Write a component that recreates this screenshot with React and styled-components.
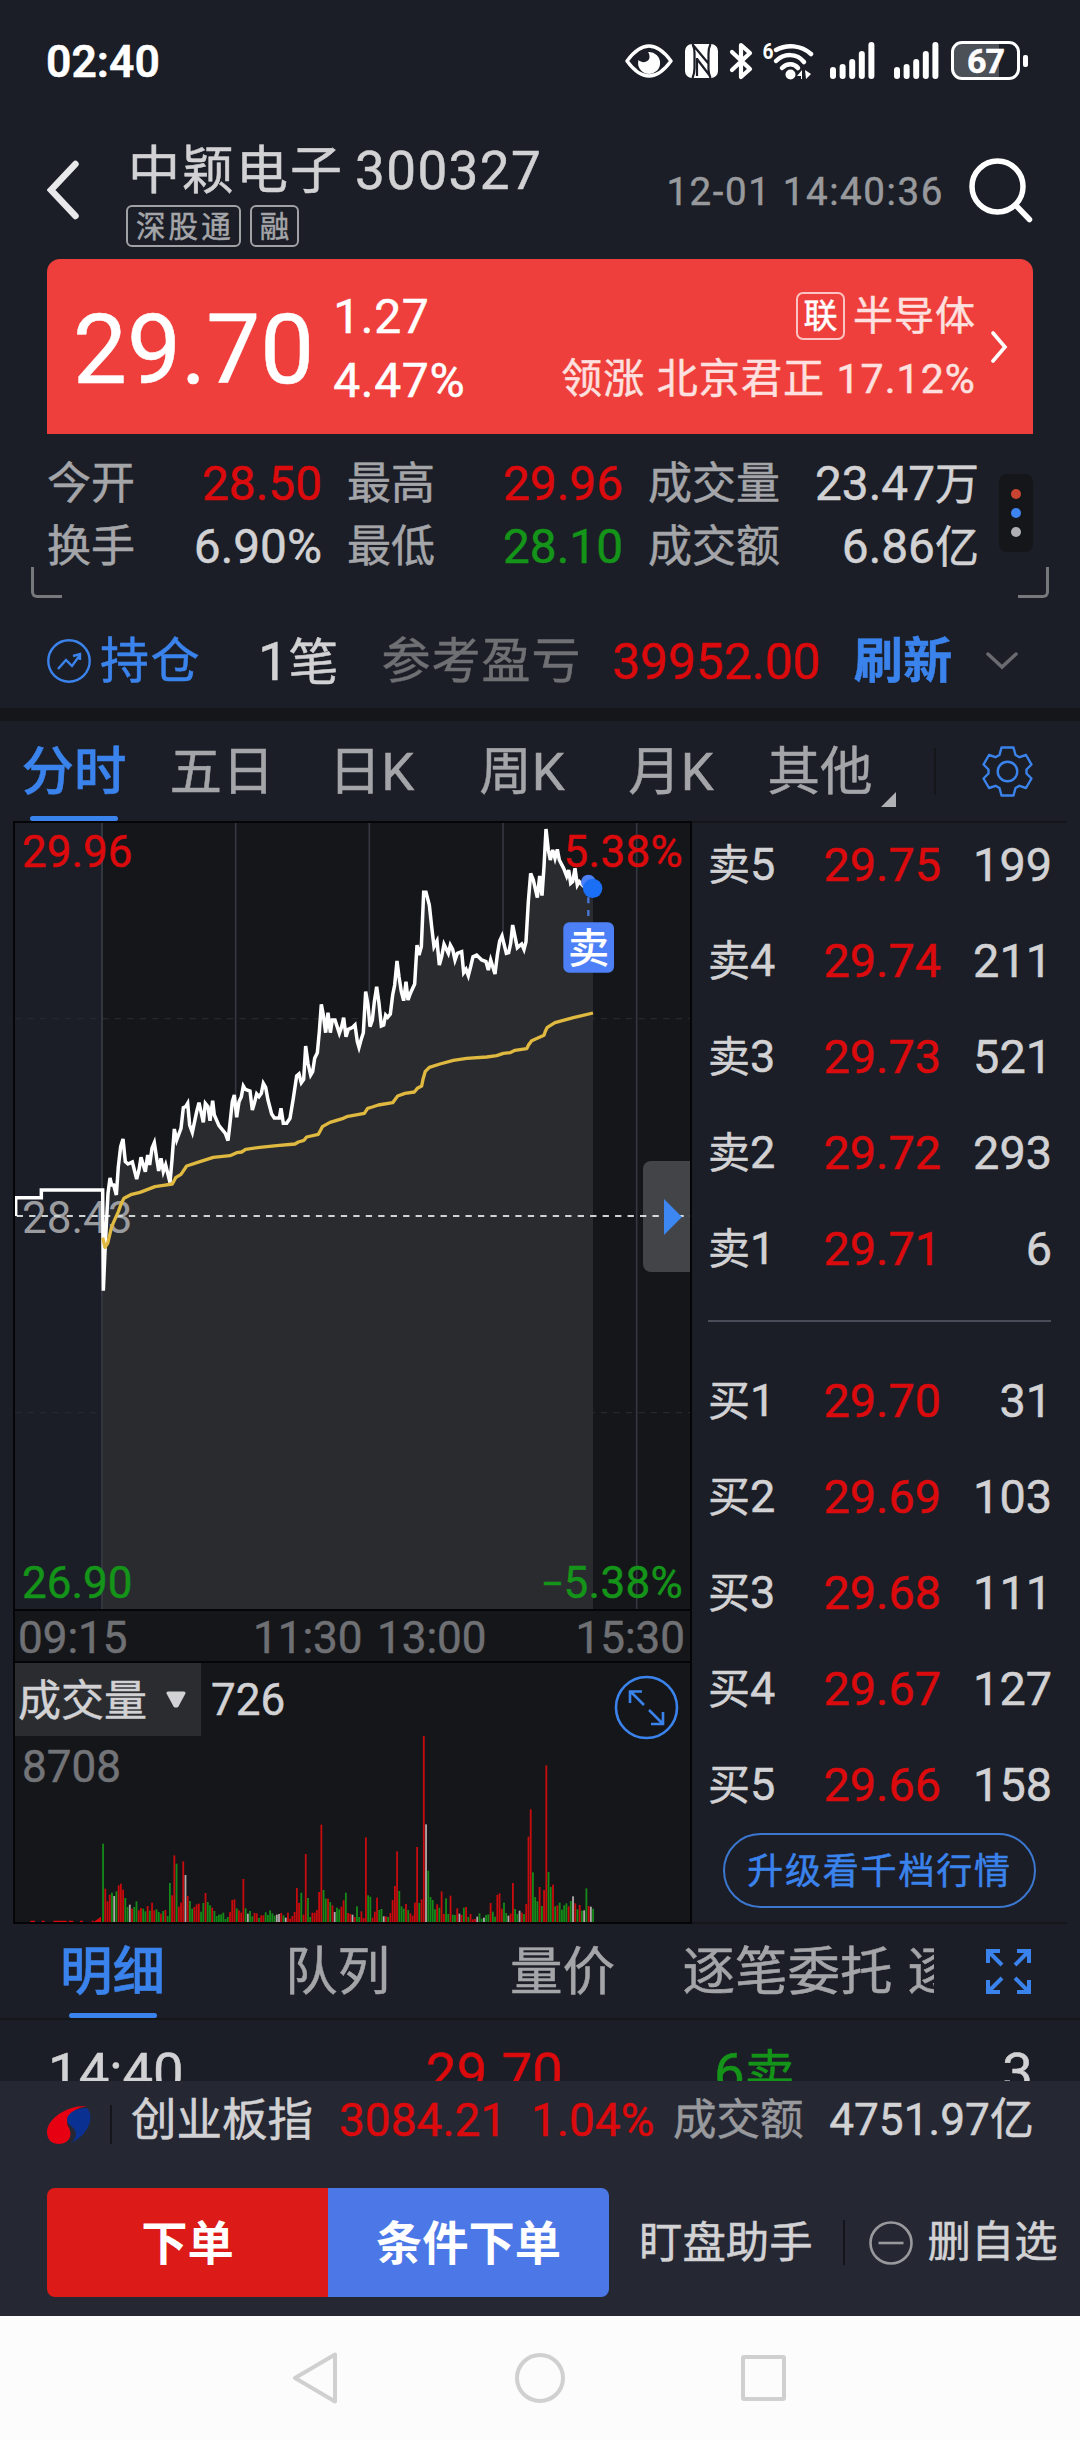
import React from "react";
import styled, { createGlobalStyle } from "styled-components";

const colors = {
  page: "#1b1e26",
  panel: "#15161a",
  footer: "#252733",
  border: "#050508",
  text: "#d2d2d4",
  label: "#a4a5a9",
  muted: "#6f7074",
  red: "#da0a0d",
  green: "#149418",
  blue: "#3b83ec"
};

const GlobalStyle = createGlobalStyle`
  * {
    box-sizing: border-box;
  }
  body {
    margin: 0;
    background: ${colors.page};
    font-family: Roboto, "Noto Sans CJK SC", sans-serif;
    color: ${colors.text};
    -webkit-text-stroke: 0.5px;
  }
  svg {
    display: block;
    flex: none;
  }
`;

const Screen = styled.div`
  width: 1080px;
  height: 2440px;
  display: flex;
  flex-direction: column;
  overflow: hidden;
  background: ${colors.page};
  white-space: nowrap;
`;

/* status bar */

const StatusBar = styled.div`
  display: flex;
  align-items: center;
  height: 121px;
  padding: 0 52px 0 46px;
`;

const Clock = styled.div`
  margin-right: auto;
  padding-top: 3px;
  font-size: 44.5px;
  font-weight: 600;
  line-height: 60px;
  color: #fff;
`;

const StatusIcons = styled.div`
  display: flex;
  align-items: center;
  .nfc {
    margin-left: 12px;
  }
  .bluetooth {
    margin-left: 11px;
  }
  .wifi {
    margin-left: 9px;
  }
  .signal {
    margin-left: 16px;
  }
  .signal + .signal {
    margin-left: 19px;
  }
`;

const Battery = styled.div`
  display: flex;
  align-items: center;
  margin-left: 12px;
  &::after {
    content: "";
    width: 5px;
    height: 12px;
    margin-left: 3px;
    border-radius: 2px;
    background: #fff;
  }
`;

const BatteryBody = styled.div`
  width: 69px;
  height: 39px;
  border: 3px solid #fff;
  border-radius: 11px;
  background: linear-gradient(90deg, #4c5057 71%, transparent 71%);
  font-size: 34px;
  font-weight: 700;
  line-height: 35px;
  text-align: center;
  letter-spacing: -1px;
  color: #fff;
`;

/* header */

const Header = styled.div`
  display: flex;
  align-items: center;
  height: 138px;
  padding: 0 47px;
`;

const TitleBlock = styled.div`
  margin-left: 47px;
  margin-right: auto;
  padding-top: 1px;
`;

const Title = styled.div`
  display: flex;
  height: 70px;
  margin-left: 2px;
  font-size: 52px;
  line-height: 73px;
  letter-spacing: 2px;
`;

const Code = styled.span`
  margin-left: 11px;
  font-size: 53px;
  letter-spacing: 1.4px;
`;

const Tags = styled.div`
  display: flex;
  gap: 9px;
`;

const Tag = styled.span`
  height: 42px;
  padding: 0 5px 0 8px;
  border: 2px solid #a0a1a5;
  border-radius: 6px;
  font-size: 29.5px;
  line-height: 40px;
  letter-spacing: 3.1px;
  color: ${colors.label};
`;

const Timestamp = styled.div`
  margin-right: 25px;
  padding-top: 3px;
  font-size: 38.5px;
  line-height: 50px;
  letter-spacing: 1.6px;
  color: #98999d;
`;

/* price card */

const PriceCard = styled.div`
  display: flex;
  align-items: center;
  height: 175px;
  margin: 0 47px;
  padding: 3px 25px 0;
  border-radius: 13px 13px 0 0;
  background: #ef3f3c;
  color: #fff;
`;

const LastPrice = styled.div`
  padding: 3px 0 0 1px;
  font-size: 96px;
  line-height: 120px;
`;

const Change = styled.div`
  margin: 0 auto 0 19px;
  padding-top: 1px;
  font-size: 48px;
  line-height: 63.5px;
  letter-spacing: 0.7px;
`;

const Sector = styled.div`
  display: flex;
  flex-direction: column;
  align-items: flex-end;
  margin-right: 15px;
  font-size: 40px;
  line-height: 63.5px;
  letter-spacing: 1px;
  color: #fde0df;
`;

const SectorName = styled.div`
  display: flex;
  align-items: center;
`;

const SectorLeader = styled.div`
  font-size: 41px;
  letter-spacing: 1.1px;
`;

const SectorBadge = styled.span`
  width: 49px;
  height: 48px;
  margin-right: 8px;
  border: 2px solid #fbc3c1;
  border-radius: 7px;
  font-size: 34px;
  line-height: 45px;
  letter-spacing: 0;
  text-align: center;
  color: #fff;
`;

/* quote stats */

const Stats = styled.div`
  position: relative;
  display: flex;
  height: 164px;
  padding: 19px 47px 0;
  &::before,
  &::after {
    content: "";
    position: absolute;
    bottom: 0;
    width: 28px;
    height: 28px;
    border-bottom: 3px solid #77787c;
  }
  &::before {
    left: 31px;
    border-left: 3px solid #77787c;
    border-bottom-left-radius: 6px;
  }
  &::after {
    right: 31px;
    border-right: 3px solid #77787c;
    border-bottom-right-radius: 6px;
  }
`;

const StatGrid = styled.div`
  display: grid;
  grid-template-columns: 275px 276px 331px;
  grid-auto-rows: 63px;
  column-gap: 25px;
`;

const Stat = styled.div`
  display: flex;
  justify-content: space-between;
  font-size: 44px;
  line-height: 63px;
  color: ${colors.label};
`;

const StatValue = styled.span`
  font-size: 47.8px;
  color: ${props => props.$color || colors.text};
  small {
    font-size: 44px;
  }
`;

const MorePill = styled.div`
  display: flex;
  flex-direction: column;
  align-items: center;
  justify-content: center;
  gap: 9px;
  width: 34px;
  height: 78px;
  margin: 21px 0 0 auto;
  border-radius: 8px;
  background: ${colors.panel};
`;

const Dot = styled.span`
  width: 10px;
  height: 10px;
  border-radius: 50%;
  background: ${props => props.$color};
`;

/* position row */

const Position = styled.div`
  display: flex;
  align-items: center;
  height: 110px;
  padding: 16px 62px 0 47px;
  font-size: 49px;
  line-height: 70px;
  > span {
    padding-top: 2px;
  }
`;

const PositionLink = styled.span`
  margin-left: 9px;
  color: ${colors.blue};
  letter-spacing: 1.5px;
`;

const PositionCount = styled.span`
  margin-left: 57px;
  font-size: 54px;
  small {
    font-size: 50px;
  }
`;

const PositionLabel = styled.span`
  margin-left: 43px;
  letter-spacing: 1px;
  color: ${colors.muted};
`;

const PositionValue = styled.span`
  margin-left: 31px;
  font-size: 50px;
  letter-spacing: -0.2px;
  color: ${colors.red};
`;

const Refresh = styled.span`
  margin: 0 auto 0 33px;
  font-weight: 700;
  letter-spacing: 0.5px;
  color: ${colors.blue};
`;

const Band = styled.div`
  height: 13px;
  background: ${colors.panel};
`;

/* period tabs */

const PeriodTabs = styled.div`
  display: grid;
  grid-template-columns: 148px 148px 151px 150px 148px 150px 1fr;
  grid-template-rows: 100px;
  height: 100px;
`;

const Tab = styled.div`
  position: relative;
  font-size: 52.5px;
  font-weight: ${props => (props.$active ? 500 : 400)};
  line-height: ${props => props.$line || 102}px;
  text-align: center;
  color: ${props => (props.$active ? colors.blue : colors.label)};
  &::after {
    content: "";
    display: ${props => (props.$active ? "block" : "none")};
    position: absolute;
    bottom: 0;
    left: calc(50% - 44px);
    width: 88px;
    height: 5px;
    border-radius: 3px;
    background: ${colors.blue};
  }
`;

const OtherTab = styled(Tab)`
  svg {
    position: absolute;
    left: 136px;
    bottom: 14px;
  }
`;

const SettingsSlot = styled.div`
  display: flex;
  align-items: center;
  justify-content: flex-end;
  padding-right: 47px;
  &::before {
    content: "";
    width: 2px;
    height: 47px;
    margin-right: 46px;
    background: ${colors.panel};
  }
`;

/* charts */

const Body = styled.div`
  display: flex;
  height: 1103px;
  padding-left: 13px;
`;

const Charts = styled.div`
  display: flex;
  flex-direction: column;
  width: 679px;
`;

const PricePanel = styled.div`
  position: relative;
  display: grid;
  height: 790px;
  border: 2px solid ${colors.border};
  background: ${colors.panel};
  > * {
    grid-area: 1 / 1;
  }
`;

const ChartLabels = styled.div`
  display: grid;
  grid-template-columns: 1fr 1fr;
  align-content: space-between;
  margin-bottom: -3px;
  padding: 2px 7px 0;
  font-size: 44px;
  line-height: 55px;
  z-index: 1;
`;

const ChartLabel = styled.span`
  color: ${props => props.$color};
  &:nth-child(even) {
    text-align: right;
    letter-spacing: 0.3px;
  }
  small {
    margin-right: -1px;
    font-size: 41px;
  }
`;

const Handle = styled.div`
  position: absolute;
  right: 0;
  top: 338px;
  display: flex;
  align-items: center;
  justify-content: flex-end;
  width: 47px;
  height: 111px;
  padding-right: 8px;
  border-radius: 8px 0 0 8px;
  background: rgba(255, 255, 255, 0.2);
`;

const TimeAxis = styled.div`
  display: grid;
  grid-template-columns: 235px 124px 1fr auto;
  height: 50px;
  padding: 0 5px 0 3px;
  border: solid ${colors.border};
  border-width: 0 2px;
  background: ${colors.panel};
  font-size: 44px;
  line-height: 54px;
  color: ${colors.muted};
`;

const VolumePanel = styled.div`
  display: grid;
  height: 263px;
  border: 2px solid ${colors.border};
  background: ${colors.panel};
  > * {
    grid-area: 1 / 1;
  }
`;

const VolumeHead = styled.div`
  display: flex;
  align-items: flex-start;
  font-size: 44px;
  line-height: 75px;
  > svg {
    margin: 12px 11px 0 auto;
  }
`;

const IndicatorSelect = styled.div`
  display: flex;
  align-items: center;
  gap: 19px;
  width: 186px;
  height: 73px;
  margin-right: 10px;
  padding-left: 3px;
  background: #2b2c30;
  font-size: 43px;
`;

const IndicatorName = styled.span`
  padding-top: 3px;
`;

const VolumeMax = styled.div`
  align-self: start;
  padding: 74px 0 0 7px;
  font-size: 44px;
  line-height: 60px;
  color: #737478;
`;

/* order book */

const Book = styled.div`
  flex: 1;
  margin-right: 13px;
  padding: 17px 15px 0 16px;
  border-top: 2px solid ${colors.panel};
  border-bottom: 2px solid ${colors.panel};
`;

const BookRow = styled.div`
  display: grid;
  grid-template-columns: 100px 133px 1fr;
  height: 48px;
  margin-bottom: 48px;
  font-size: 46.8px;
  line-height: 50px;
  text-align: right;
`;

const BookSide = styled.span`
  font-size: 42px;
  text-align: left;
  small {
    font-size: 45px;
  }
`;

const BookPrice = styled.span`
  color: ${colors.red};
`;

const BookDivider = styled.div`
  width: 343px;
  height: 2px;
  margin-bottom: 54px;
  background: #4a4c59;
`;

const UpgradeButton = styled.div`
  width: 313px;
  height: 75px;
  margin: -23px 0 0 15px;
  border: 2px solid #3b77cf;
  border-radius: 38px;
  font-size: 36px;
  line-height: 74px;
  text-align: center;
  letter-spacing: 1.8px;
  color: ${colors.blue};
`;

/* detail */

const DetailTabs = styled.div`
  display: flex;
  justify-content: space-between;
  align-items: center;
  height: 96px;
  padding-right: 49px;
  border-bottom: 2px solid ${colors.panel};
`;

const DetailScroll = styled.div`
  display: grid;
  grid-template-columns: repeat(4, 225px) 120px;
  grid-template-rows: 94px;
  width: 934px;
  height: 94px;
  overflow: hidden;
`;

const DetailRow = styled.div`
  display: grid;
  grid-template-columns: 378px 288px 1fr auto;
  height: 61px;
  padding: 0 47px 0 48px;
  overflow: hidden;
  font-size: 54.5px;
  line-height: 104px;
`;

const DetailCell = styled.span`
  color: ${props => props.$color || colors.text};
  small {
    font-size: 50px;
  }
`;

/* footer */

const Footer = styled.div`
  height: 235px;
  background: ${colors.footer};
`;

const IndexBar = styled.div`
  display: flex;
  align-items: center;
  height: 77px;
  padding: 2px 46px 0 47px;
  font-size: 46px;
  line-height: 77px;
  > svg {
    margin-top: 8px;
  }
`;

const IndexDivider = styled.span`
  width: 2px;
  height: 39px;
  margin: 8px 19px 0 19px;
  background: #14151a;
`;

const IndexName = styled.span`
  width: 208px;
  font-size: 45.5px;
`;

const IndexValue = styled.span`
  width: ${props => props.$width}px;
  color: ${colors.red};
`;

const IndexLabel = styled.span`
  font-size: 43.5px;
  color: #98999d;
`;

const Turnover = styled.span`
  margin-left: auto;
  font-size: 44.2px;
`;

const Actions = styled.div`
  display: flex;
  align-items: center;
  height: 109px;
  margin: 30px 0 0 47px;
  font-size: 43.4px;
  line-height: 112px;
`;

const ActionButton = styled.div`
  width: 281px;
  height: 109px;
  border-radius: ${props => (props.$left ? "8px 0 0 8px" : "0 8px 8px 0")};
  background: ${props => (props.$left ? "#dc1b18" : "#4b78e6")};
  font-size: 46.3px;
  font-weight: 700;
  text-align: center;
  color: #fff;
  -webkit-text-stroke: 0;
`;

const Assistant = styled.span`
  margin-left: 30px;
  padding-top: 2px;
`;

const RemoveAction = styled.div`
  display: flex;
  align-items: center;
  gap: 15px;
  height: 45px;
  margin-left: 30px;
  padding-left: 24px;
  border-left: 2px solid #14151a;
`;

const NavBar = styled.div`
  display: flex;
  align-items: center;
  height: 124px;
  padding: 0 0 1px 292px;
  background: #fcfcfc;
`;

const Eye = () => (
  <svg width="48" height="34" viewBox="0 0 48 34" fill="none">
    <path
      d="M2 17C10 6 17 2 24 2s14 4 22 15C38 28 31 32 24 32S10 28 2 17z"
      stroke="#fff"
      strokeWidth="3.4"
      strokeLinejoin="round"
    />
    <path d="M23 8a11 11 0 1 1-9.5 8c4 4 11 2 11-3 0-2-.5-4-1.500-5z" fill="#fff" />
  </svg>
);

const Nfc = () => (
  <svg className="nfc" width="33" height="34" viewBox="0 0 33 34" fill="none">
    <rect width="33" height="34" rx="7" fill="#fff" />
    <path
      d="M7.500 34c1.500-3 2-6 2-10V9c0-3-.5-6-2-9M25.500 0c-1.500 3-2 6-2 10v15c0 3 .5 6 2 9M8 1l15 18M12 14v18M12 15l13 17"
      stroke={colors.page}
      strokeWidth="2.2"
    />
  </svg>
);

const Bluetooth = () => (
  <svg className="bluetooth" width="25" height="38" viewBox="0 0 25 38" fill="none">
    <path
      d="M3 10l18 17-9 8V3l9 8L3 28"
      stroke="#fff"
      strokeWidth="4.2"
      strokeLinejoin="round"
      strokeLinecap="round"
    />
  </svg>
);

const Wifi = () => (
  <svg className="wifi" width="51" height="38" viewBox="0 0 51 38">
    <text x="-0.5" y="17" fontSize="22" fontWeight="700" textLength="11" lengthAdjust="spacingAndGlyphs" fill="#fff">
      6
    </text>
    <g fill="none" stroke="#fff" strokeWidth="4.5" strokeLinecap="round">
      <path d="M13 8c11-6 25-5 35 4" />
      <path d="M13 19c8-8 21-8 28 1" />
      <path d="M19 26c5-5 12-5 16 0" />
    </g>
    <circle cx="27.5" cy="32.5" r="5" fill="#fff" />
    <path d="M34 34l5-6v9h-1v-3zM42 28l6 4-5 5z" fill="#fff" />
  </svg>
);

const Signal = () => (
  <svg className="signal" width="45" height="37" viewBox="0 0 45 37" fill="#fff">
    {[12, 15, 20, 28, 37].map((h, i) => (
      <rect key={h} x={i * 9.6} y={37 - h} width="6" height={h} rx="3" />
    ))}
  </svg>
);

const Gear = () => (
  <svg width="51" height="51" viewBox="0 0 51 51" fill="none" stroke={colors.blue} strokeWidth="2.4">
    <path
      strokeLinejoin="round"
      d="M19.500 1.500h12l2 7.500 4 2.200 6.500-2.200 5.500 9.500-5 5v4l5 5-5.500 9.500-6.500-2.200-4 2.200-2 7.500h-12l-2-7.500-4-2.200-6.500 2.200-5.500-9.500 5-5v-4l-5-5L7 9l6.500 2.200 4-2.200z"
    />
    <circle cx="25.5" cy="25.5" r="9.8" />
  </svg>
);

const Expand = () => (
  <svg width="45" height="45" viewBox="0 0 45 45" fill="none" stroke={colors.blue} strokeWidth="4">
    <path d="M2 14V2h12M2 2l14 14M31 2h12v12M43 2L29 16M2 31v12h12M2 43l14-14M31 43h12V31M43 43L29 29" />
  </svg>
);

const FullScreenCircle = () => (
  <svg width="65" height="65" viewBox="0 0 65 65" fill="none" stroke={colors.blue} strokeWidth="2.6">
    <circle cx="32.5" cy="32.5" r="30.5" />
    <path d="M16 28V16.500h12M17 17l13 13M35 35l13 13M49 37v12H37" />
  </svg>
);

// price curve is kept in third-of-a-pixel units, origin at the page corner of the chart
const PRICE =
  "308,1140 310,1442 316,1300 324,1150 330,1104 335,1125 341,1125 349,1155 355,1070 362,1010 369,987 376,1055 384,1062 397,1056 410,1107 417,1080 423,1042 436,1085 443,1035 449,1065 456,1015 463,998 470,1045 476,1083 483,1045 490,1085 497,1065 510,1118 516,1050 523,957 530,990 543,955 550,893 557,890 563,880 569,945 577,967 590,905 597,878 610,937 616,880 624,890 630,932 638,872 643,915 657,947 676,970 684,992 690,940 697,875 703,855 710,922 717,875 724,860 730,828 736,838 750,843 757,900 763,880 770,852 777,860 784,850 790,820 797,832 804,870 815,912 823,924 838,924 843,895 850,940 860,940 870,925 880,865 890,798 897,792 904,818 911,808 917,708 924,760 932,795 938,785 944,745 952,728 958,665 964,583 970,615 977,668 984,608 991,668 997,630 1005,630 1018,670 1025,650 1031,623 1038,680 1045,658 1058,652 1065,645 1072,695 1077,712 1083,690 1090,668 1097,545 1104,585 1110,650 1117,630 1123,575 1130,530 1137,580 1144,648 1151,645 1157,615 1163,622 1171,612 1178,555 1184,525 1191,453 1197,500 1204,545 1211,572 1218,515 1224,570 1232,548 1244,522 1251,405 1257,435 1264,410 1271,247 1278,247 1288,285 1295,350 1302,410 1311,393 1318,465 1325,440 1332,403 1345,430 1351,405 1358,418 1365,450 1372,430 1385,425 1391,488 1398,478 1405,497 1412,470 1419,440 1430,435 1445,450 1458,455 1465,480 1472,450 1485,492 1492,435 1499,393 1506,378 1514,410 1519,430 1526,428 1532,400 1538,345 1545,380 1552,413 1565,402 1572,418 1578,395 1585,275 1592,190 1600,210 1612,263 1619,198 1626,257 1632,170 1638,57 1645,120 1651,150 1658,120 1665,145 1672,118 1678,150 1691,175 1700,198 1706,180 1712,220 1718,215 1725,175 1732,225 1738,215 1747,225 1758,235 1779,235";

const AVERAGE =
  "308,1283 315,1312 323,1300 335,1250 355,1205 364,1180 372,1165 395,1153 420,1147 465,1130 490,1126 517,1122 527,1103 543,1093 560,1068 600,1055 640,1042 690,1037 710,1028 725,1026 737,1018 780,1012 830,1007 885,1002 895,996 912,991 920,981 955,973 962,960 967,950 990,937 1030,925 1040,920 1093,910 1103,895 1117,891 1135,885 1178,878 1193,858 1215,850 1243,846 1252,835 1265,828 1269,808 1276,784 1288,772 1320,762 1360,751 1400,745 1460,741 1490,737 1510,730 1530,728 1545,721 1580,716 1586,704 1595,692 1632,676 1636,664 1642,652 1665,638 1720,623 1779,609";

const VOLUMES =
  "g235 r100 r62 r82 g88 w78 g92 r110 r115 r97 g72 g45 w52 r40 g45 g62 r35 r42 g40 g32 r48 g34 r58 r35 g38 g30 r25 g33 r36 g18 g117 r80 r200 g175 r46 r58 r182 w141 r78 g63 g40 r45 r53 r55 g31 g57 r87 g60 g50 r43 g33 g18 g22 g23 g28 g9 g15 r30 r66 r68 g41 r35 r28 r129 g41 w25 g33 g17 r27 r26 g12 r20 r20 g29 g21 g35 g26 g19 w22 w24 r27 g20 w13 r28 r10 r18 r30 r102 r57 g88 r22 r204 g72 g15 r28 r28 r36 r90 r292 g96 g70 r70 g60 r50 w30 g43 g38 r46 r65 g88 r27 r24 w22 r15 g47 g15 r32 r12 r254 g80 g76 r13 r31 r73 g36 g39 w17 r17 g15 r27 r66 r108 r212 g93 g47 g40 r54 g36 r26 r19 r58 r225 g57 r68 r558 w293 g154 g75 g66 g38 r53 g43 r92 r24 g71 g24 r79 g22 g21 r41 w25 r21 g43 r45 g15 r24 r8 r9 w16 g26 g10 w13 g21 g23 r57 g31 g16 r81 r86 r40 g58 g27 w19 r25 r117 g39 g24 w34 r28 g24 r54 r256 r338 g149 g75 g62 r105 g48 r96 r470 g150 g105 r112 g47 r50 g58 g37 g50 g56 r47 g63 w77 r56 g38 r51 g34 w35 g101 r48 w46 g40"
    .split(" ")
    .map(v => ({ kind: v[0], value: Number(v.slice(1)) }));

const BAR_COLORS = { r: "#c80b0d", g: "#158a18", w: "#b4a9aa" };

const PriceChart = () => (
  <svg width="675" height="786" viewBox="45 39 2025 2358" fill="none">
    <rect x="45" y="39" width="261" height="2358" fill={colors.page} />
    <path d="M45 626H2070M45 1808H2070" stroke="#26282d" strokeWidth="4" strokeDasharray="19 18.4" />
    <path d="M707 39V2397M1108 39V2397M1509 39V2397M1910 39V2397" stroke="#343640" strokeWidth="5" />
    <polygon points={`308,2397 ${PRICE} 1779,2397`} fill="#2a2b2f" />
    <path d="M306 39V2397" stroke="#33363f" strokeWidth="6" />
    <text x="66" y="1270" fontSize="132" fill="#9b9ca0">
      28.43
    </text>
    <path d="M50 1218H2070" stroke="#ced3d3" strokeWidth="6" strokeDasharray="19 18.4" />
    <polyline points={`47,1218 47,1163 124,1163 124,1140 ${PRICE}`} stroke="#fff" strokeWidth="10.5" />
    <polyline points={AVERAGE} stroke="#e0b940" strokeWidth="10" strokeLinejoin="round" />
    <circle cx="1765" cy="216" r="22" fill="#4d80f5" />
    <circle cx="1778" cy="235" r="29" fill="#1a6ff5" />
    <path d="M1765 262v18M1765 300v18" stroke="#4877d6" strokeWidth="7" />
    <rect x="1690" y="337" width="152" height="151" rx="18" fill="#4d80f7" />
    <text x="1766" y="458" fontSize="124" fontWeight="500" textAnchor="middle" fill="#fff">
      卖
    </text>
  </svg>
);

const VolumeChart = () => (
  <svg width="675" height="259" viewBox="-231 -207 2025 777">
    <path d="M-185 568H5" stroke={colors.red} strokeWidth="4" strokeDasharray="14 20 9 26 40 6" />
    <path d="M5 570l22-16v16z" fill={colors.red} />
    {VOLUMES.map((bar, i) => (
      <rect
        key={i}
        x={30.5 + i * 6.682}
        y={570 - bar.value}
        width="5.4"
        height={bar.value}
        fill={BAR_COLORS[bar.kind]}
      />
    ))}
  </svg>
);

const stats = [
  { label: "今开", value: "28.50", color: colors.red },
  { label: "最高", value: "29.96", color: colors.red },
  { label: "成交量", value: "23.47", unit: "万" },
  { label: "换手", value: "6.90%" },
  { label: "最低", value: "28.10", color: colors.green },
  { label: "成交额", value: "6.86", unit: "亿" }
];

const sells = [
  [5, "29.75", 199],
  [4, "29.74", 211],
  [3, "29.73", 521],
  [2, "29.72", 293],
  [1, "29.71", 6]
];

const buys = [
  [1, "29.70", 31],
  [2, "29.69", 103],
  [3, "29.68", 111],
  [4, "29.67", 127],
  [5, "29.66", 158]
];

const BookRows = ({ side, rows }) =>
  rows.map(([level, price, volume]) => (
    <BookRow key={level}>
      <BookSide>
        {side}
        <small>{level}</small>
      </BookSide>
      <BookPrice>{price}</BookPrice>
      <span>{volume}</span>
    </BookRow>
  ));

const App = () => (
  <Screen>
    <GlobalStyle />
    <StatusBar>
      <Clock>02:40</Clock>
      <StatusIcons>
        <Eye />
        <Nfc />
        <Bluetooth />
        <Wifi />
        <Signal />
        <Signal />
        <Battery>
          <BatteryBody>67</BatteryBody>
        </Battery>
      </StatusIcons>
    </StatusBar>

    <Header>
      <svg width="32" height="60" viewBox="0 0 32 60" fill="none">
        <path d="M28.500 4L4 30l24.500 26" stroke="#e9e9eb" strokeWidth="6.5" strokeLinecap="round" />
      </svg>
      <TitleBlock>
        <Title>
          中颖电子<Code>300327</Code>
        </Title>
        <Tags>
          <Tag>深股通</Tag>
          <Tag>融</Tag>
        </Tags>
      </TitleBlock>
      <Timestamp>12-01 14:40:36</Timestamp>
      <svg width="64" height="65" viewBox="0 0 64 65" fill="none" stroke="#fff" strokeWidth="5.5">
        <circle cx="28.5" cy="28.5" r="25.5" />
        <path d="M46.500 47L60.500 61.500" strokeLinecap="round" />
      </svg>
    </Header>

    <PriceCard>
      <LastPrice>29.70</LastPrice>
      <Change>
        <div>1.27</div>
        <div>4.47%</div>
      </Change>
      <Sector>
        <SectorName>
          <SectorBadge>联</SectorBadge>半导体
        </SectorName>
        <SectorLeader>领涨 北京君正 17.12%</SectorLeader>
      </Sector>
      <svg width="17" height="34" viewBox="0 0 17 34" fill="none">
        <path d="M2 2l12 14L2 30" stroke="#fff" strokeWidth="3.6" strokeLinecap="round" />
      </svg>
    </PriceCard>

    <Stats>
      <StatGrid>
        {stats.map(stat => (
          <Stat key={stat.label}>
            {stat.label}
            <StatValue $color={stat.color}>
              {stat.value}
              {stat.unit && <small>{stat.unit}</small>}
            </StatValue>
          </Stat>
        ))}
      </StatGrid>
      <MorePill>
        <Dot $color="#c74530" />
        <Dot $color="#3d84f0" />
        <Dot $color="#b0b0b4" />
      </MorePill>
    </Stats>

    <Position>
      <svg width="44" height="44" viewBox="0 0 44 44" fill="none" stroke={colors.blue} strokeWidth="2.4">
        <circle cx="22" cy="22" r="20.7" />
        <path d="M11 30l8-9 6 6 8-11M26 17l7-2v6" />
      </svg>
      <PositionLink>持仓</PositionLink>
      <PositionCount>
        1<small>笔</small>
      </PositionCount>
      <PositionLabel>参考盈亏</PositionLabel>
      <PositionValue>39952.00</PositionValue>
      <Refresh>刷新</Refresh>
      <svg width="32" height="18" viewBox="0 0 32 18" fill="none">
        <path d="M2 2l14 13L30 2" stroke="#6a6b70" strokeWidth="3.5" strokeLinecap="round" />
      </svg>
    </Position>
    <Band />

    <PeriodTabs>
      <Tab $active>分时</Tab>
      <Tab>五日</Tab>
      <Tab>日K</Tab>
      <Tab>周K</Tab>
      <Tab>月K</Tab>
      <OtherTab>
        其他
        <svg width="15" height="15" viewBox="0 0 15 15">
          <path d="M15 0v15H0z" fill="#b0b1b5" />
        </svg>
      </OtherTab>
      <SettingsSlot>
        <Gear />
      </SettingsSlot>
    </PeriodTabs>

    <Body>
      <Charts>
        <PricePanel>
          <PriceChart />
          <ChartLabels>
            <ChartLabel $color={colors.red}>29.96</ChartLabel>
            <ChartLabel $color={colors.red}>5.38%</ChartLabel>
            <ChartLabel $color={colors.green}>26.90</ChartLabel>
            <ChartLabel $color={colors.green}>
              <small>−</small>5.38%
            </ChartLabel>
          </ChartLabels>
          <Handle>
            <svg width="18" height="36" viewBox="0 0 18 36">
              <path d="M0 0l18 18L0 36z" fill="#3d87f2" />
            </svg>
          </Handle>
        </PricePanel>
        <TimeAxis>
          <span>09:15</span>
          <span>11:30</span>
          <span>13:00</span>
          <span>15:30</span>
        </TimeAxis>
        <VolumePanel>
          <VolumeChart />
          <VolumeMax>8708</VolumeMax>
          <VolumeHead>
            <IndicatorSelect>
              <IndicatorName>成交量</IndicatorName>
              <svg width="20" height="17" viewBox="0 0 20 17">
                <path
                  d="M2 2h16L11 15H9z"
                  fill={colors.text}
                  stroke={colors.text}
                  strokeWidth="3"
                  strokeLinejoin="round"
                />
              </svg>
            </IndicatorSelect>
            726
            <FullScreenCircle />
          </VolumeHead>
        </VolumePanel>
      </Charts>
      <Book>
        <BookRows side="卖" rows={sells} />
        <BookDivider />
        <BookRows side="买" rows={buys} />
        <UpgradeButton>升级看千档行情</UpgradeButton>
      </Book>
    </Body>

    <DetailTabs>
      <DetailScroll>
        <Tab $active $line={97}>
          明细
        </Tab>
        <Tab $line={97}>队列</Tab>
        <Tab $line={97}>量价</Tab>
        <Tab $line={97}>逐笔委托</Tab>
        <Tab $line={97}>逐笔</Tab>
      </DetailScroll>
      <Expand />
    </DetailTabs>
    <DetailRow>
      <DetailCell>14:40</DetailCell>
      <DetailCell $color={colors.red}>29.70</DetailCell>
      <DetailCell $color={colors.green}>
        6<small>卖</small>
      </DetailCell>
      <DetailCell>3</DetailCell>
    </DetailRow>

    <Footer>
      <IndexBar>
        <svg width="44" height="40" viewBox="0 0 44 40">
          <path d="M40 1C20 0 0 14 0 27c0 8 5 12 12 12 10 0 14-9 10-16-5-8 1-19 18-22z" fill="#e60012" />
          <path d="M40 3c8 8 2 27-16 35 7-6 6-13 0-17C15 15 22 3 40 3z" fill="#0a3192" />
        </svg>
        <IndexDivider />
        <IndexName>创业板指</IndexName>
        <IndexValue $width={192}>3084.21</IndexValue>
        <IndexValue $width={142}>1.04%</IndexValue>
        <IndexLabel>成交额</IndexLabel>
        <Turnover>4751.97亿</Turnover>
      </IndexBar>
      <Actions>
        <ActionButton $left>下单</ActionButton>
        <ActionButton>条件下单</ActionButton>
        <Assistant>盯盘助手</Assistant>
        <RemoveAction>
          <svg width="44" height="44" viewBox="0 0 44 44" fill="none" stroke="#98999d" strokeWidth="2.6">
            <circle cx="22" cy="22" r="20.5" />
            <path d="M9.500 22h25" />
          </svg>
          删自选
        </RemoveAction>
      </Actions>
    </Footer>

    <NavBar>
      <svg width="496" height="52" viewBox="0 0 496 52" fill="none" stroke="#d0d0d0" strokeWidth="4">
        <path d="M43 2.500v47L3 26z" strokeLinejoin="round" />
        <circle cx="248" cy="26" r="23" />
        <rect x="451" y="5" width="41" height="42" rx="1" />
      </svg>
    </NavBar>
  </Screen>
);

export default App;
